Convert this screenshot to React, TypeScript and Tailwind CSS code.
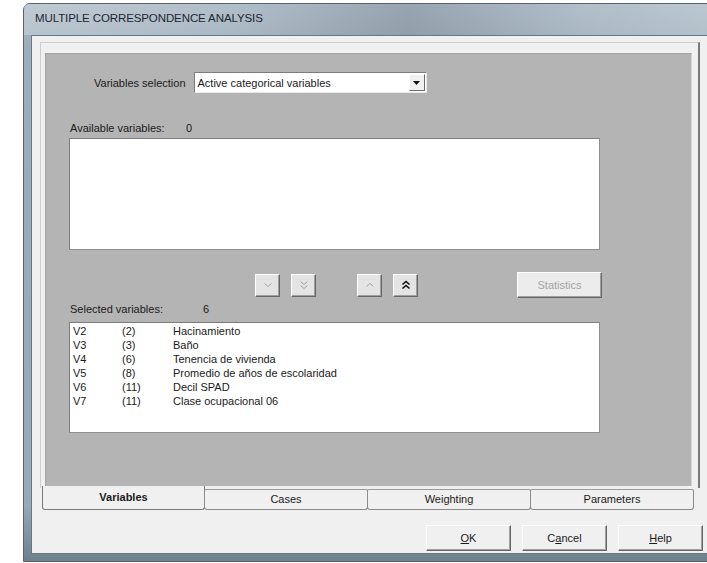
import { ReactNode } from "react";

interface SelectedVar {
  code: string;
  mods: string;
  label: string;
}

const SELECTED: SelectedVar[] = [
  { code: "V2", mods: "(2)", label: "Hacinamiento" },
  { code: "V3", mods: "(3)", label: "Baño" },
  { code: "V4", mods: "(6)", label: "Tenencia de vivienda" },
  { code: "V5", mods: "(8)", label: "Promedio de años de escolaridad" },
  { code: "V6", mods: "(11)", label: "Decil SPAD" },
  { code: "V7", mods: "(11)", label: "Clase ocupacional 06" },
];

const TABS = ["Variables", "Cases", "Weighting", "Parameters"];

// classic 3d raised edge for push buttons
const raised =
  "border border-t-white border-l-white border-r-[#666] border-b-[#666] shadow-[inset_-1px_-1px_0_#a0a0a0]";

const Chevrons = ({
  dir,
  double,
  enabled,
}: {
  dir: "up" | "down";
  double?: boolean;
  enabled?: boolean;
}) => {
  const color = enabled ? "#111" : "#a3a3a3";
  const rows = double ? [0, 4] : [2];
  return (
    <svg width="10" height="10" viewBox="0 0 10 10">
      {rows.map((off) => (
        <polyline
          key={off}
          points={
            dir === "down"
              ? `1.5,${1.5 + off} 5,${4.5 + off} 8.5,${1.5 + off}`
              : `1.5,${4.5 + off} 5,${1.5 + off} 8.5,${4.5 + off}`
          }
          fill="none"
          stroke={color}
          strokeWidth={enabled ? 1.6 : 1}
        />
      ))}
    </svg>
  );
};

const ArrowButton = ({
  className,
  children,
}: {
  className?: string;
  children: ReactNode;
}) => (
  <button
    className={`w-[25px] h-[23px] bg-[#e4e4e4] flex items-center justify-center ${raised} ${className ?? ""}`}>
    {children}
  </button>
);

const DialogButton = ({ children }: { children: ReactNode }) => (
  <button
    className={`w-[85px] h-[26px] bg-[#f0f0f0] text-[11px] text-[#1b1b1b] flex items-center justify-center ${raised}`}>
    {children}
  </button>
);

export default function App() {
  return (
    <div className="w-[707px] h-[563px] bg-white overflow-hidden pl-[23px] pt-[3px] font-['Liberation_Sans',Arial,sans-serif]">
      <div className="w-[700px] h-[559px] rounded-t-[7px] border border-[#56636e] bg-[linear-gradient(180deg,#a9b8c4_0%,#9dadba_8%,#98a9b6_90%,#6f808d_100%)] flex flex-col px-[7px] pb-[7px]">
        {/* title bar */}
        <div className="h-[31px] flex items-center pb-[1px] bg-[linear-gradient(90deg,rgba(255,255,255,0.25),rgba(255,255,255,0.1)_30%,rgba(0,0,0,0.1)_55%,rgba(255,255,255,0.1)_80%,rgba(255,255,255,0.22))] -mx-[7px] px-[11px]">
          <span className="text-[11.5px] text-[#1c2630] tracking-[-0.1px]">
            MULTIPLE CORRESPONDENCE ANALYSIS
          </span>
        </div>

        {/* client area */}
        <div className="flex-1 bg-[#f0f0f0] border border-[#677885] flex flex-col text-[#1b1b1b]">
          {/* tab page */}
          <div className="ml-[8px] mt-[6px] w-[660px] h-[446px] border-t border-l border-[#cdcdcd] border-r-2 border-r-[#7a7a7a] pt-[10px] pl-[4px] pr-[6px] pb-[2px]">
            <div className="h-[433px] bg-[#b4b4b4] border-t border-l border-[#a2a2a2] border-r border-r-[#d4d4d4] flex flex-col pt-[18px] pl-[23px] text-[11px] leading-[14px]">
              <div className="h-[21px] flex items-center pl-[25px] gap-[8px]">
                <span>Variables selection</span>
                <div className="w-[233px] h-[21px] bg-white border border-t-[#7c7c7c] border-l-[#7c7c7c] border-r-[#e8e8e8] border-b-[#e8e8e8] flex items-center">
                  <span className="flex-1 pl-[3px]">Active categorical variables</span>
                  <div className="w-[16px] h-[17px] mr-[1px] bg-[#f0f0f0] border border-t-white border-l-white border-r-[#6b6b6b] border-b-[#6b6b6b] flex items-center justify-center">
                    <svg width="7" height="4" viewBox="0 0 7 4">
                      <polygon points="0,0 7,0 3.5,4" fill="#111" />
                    </svg>
                  </div>
                </div>
              </div>

              <div className="mt-[28px] flex pl-[1px]">
                <span className="w-[116px]">Available variables:</span>
                <span>0</span>
              </div>
              <div className="mt-[3px] w-[531px] h-[112px] bg-white border border-t-[#7c7c7c] border-l-[#7c7c7c] border-r-[#8e8e8e] border-b-[#8e8e8e]" />

              <div className="mt-[22px] h-[26px] flex items-center">
                <ArrowButton className="ml-[186px]">
                  <Chevrons dir="down" />
                </ArrowButton>
                <ArrowButton className="ml-[11px]">
                  <Chevrons dir="down" double />
                </ArrowButton>
                <ArrowButton className="ml-[41px]">
                  <Chevrons dir="up" />
                </ArrowButton>
                <ArrowButton className="ml-[11px]">
                  <Chevrons dir="up" double enabled />
                </ArrowButton>
                <button
                  className={`ml-[99px] w-[85px] h-[26px] bg-[#ececec] text-[#a3a3a3] flex items-center justify-center ${raised}`}>
                  Statistics
                </button>
              </div>

              <div className="mt-[4px] flex pl-[1px]">
                <span className="w-[133px]">Selected variables:</span>
                <span>6</span>
              </div>
              <div className="mt-[6px] w-[531px] h-[111px] bg-white border border-t-[#7c7c7c] border-l-[#7c7c7c] border-r-[#8e8e8e] border-b-[#8e8e8e] pt-[1px] pl-[3px]">
                {SELECTED.map((v) => (
                  <div key={v.code} className="flex h-[14px]">
                    <span className="w-[49px]">{v.code}</span>
                    <span className="w-[51px]">{v.mods}</span>
                    <span>{v.label}</span>
                  </div>
                ))}
              </div>
            </div>
          </div>

          {/* tabs along the bottom */}
          <div className="ml-[10px] flex text-[11px]">
            {TABS.map((tab, i) =>
              i === 0 ? (
                <div
                  key={tab}
                  className="w-[163px] h-[24px] -mt-[2px] bg-[#f0f0f0] border-l border-r border-b border-[#7a7a7a] rounded-b-[3px] flex items-center justify-center font-bold">
                  {tab}
                </div>
              ) : (
                <div
                  key={tab}
                  className="w-[164px] h-[21px] mt-[1px] -ml-[1px] bg-[#f0f0f0] border border-[#8a8a8a] border-t-[#9a9a9a] rounded-b-[3px] rounded-t-[2px] flex items-center justify-center">
                  {tab}
                </div>
              )
            )}
          </div>

          <div className="mt-[15px] ml-[394px] flex gap-[11px]">
            <DialogButton>
              <span>
                <span className="underline">O</span>K
              </span>
            </DialogButton>
            <DialogButton>
              <span>
                C<span className="underline">a</span>ncel
              </span>
            </DialogButton>
            <DialogButton>
              <span>
                <span className="underline">H</span>elp
              </span>
            </DialogButton>
          </div>
        </div>
      </div>
    </div>
  );
}
